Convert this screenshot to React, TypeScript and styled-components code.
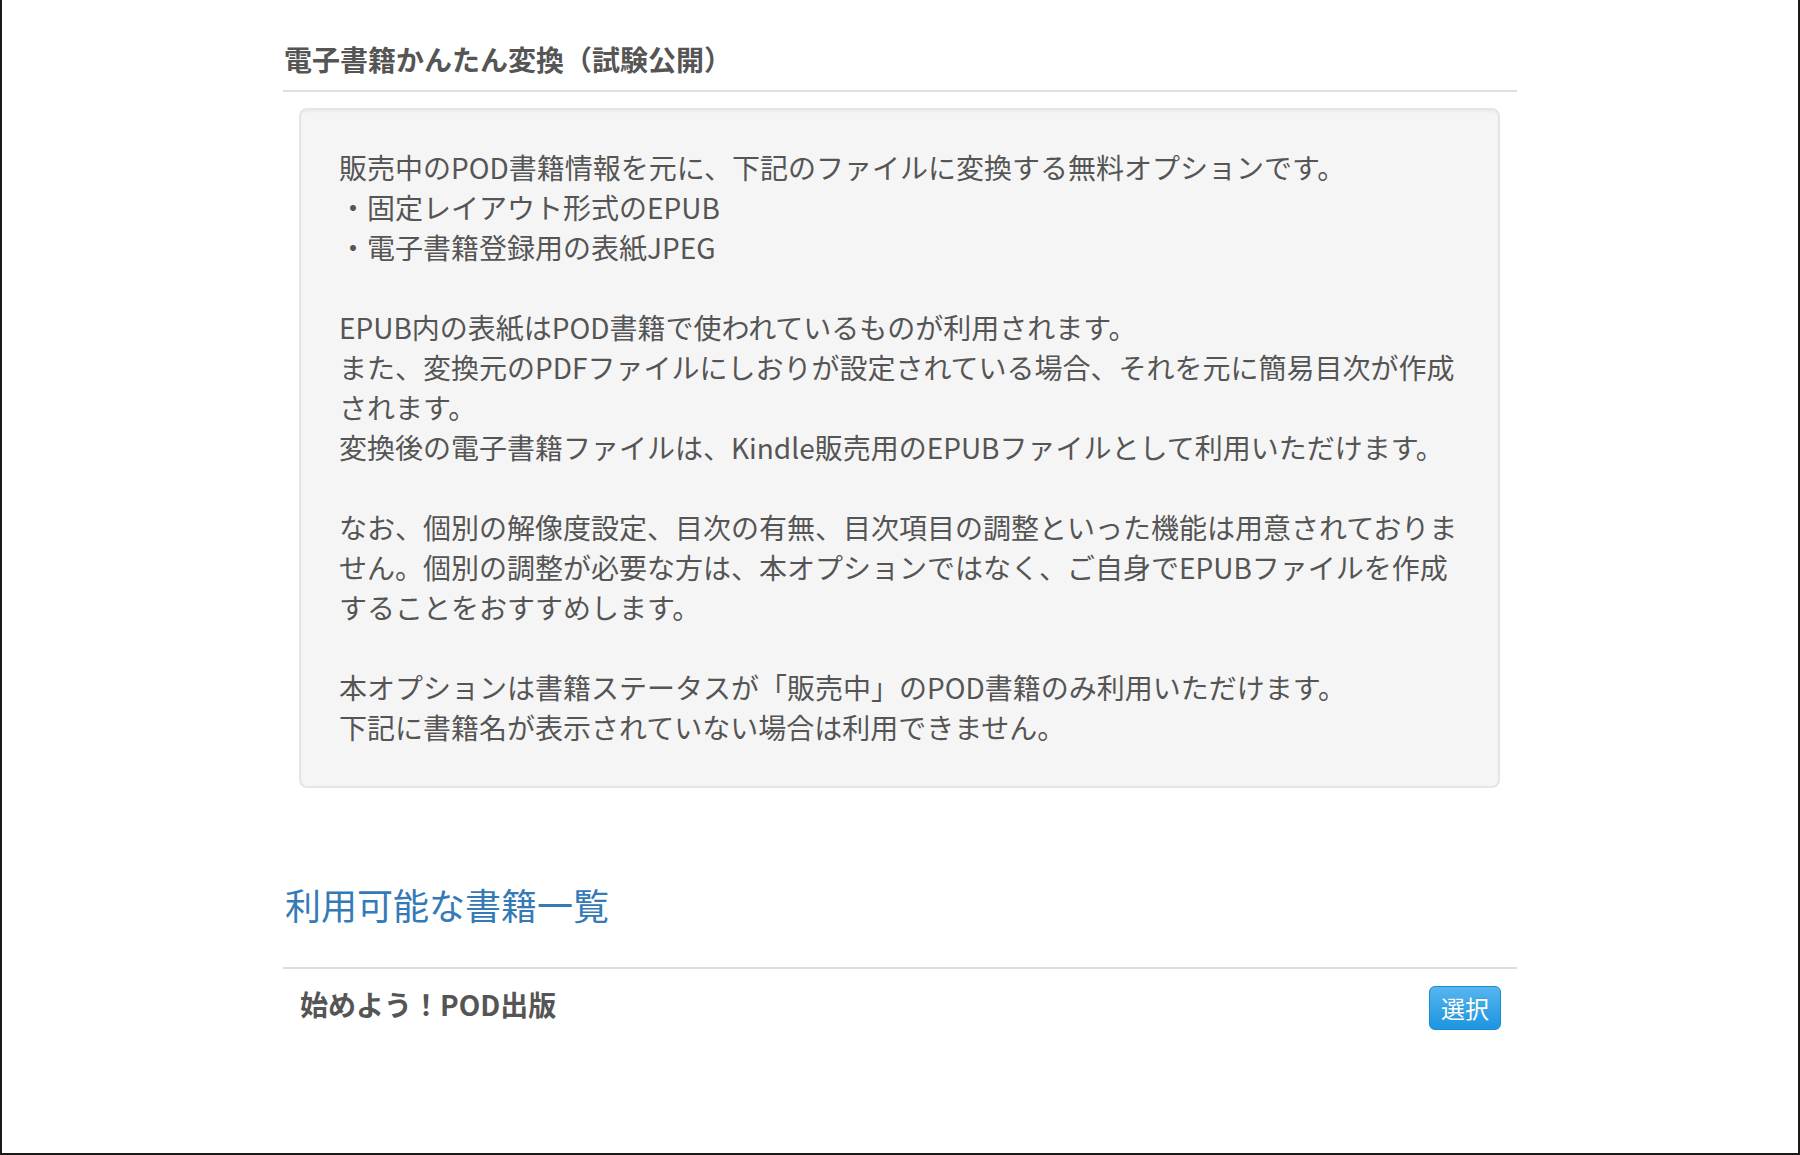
import React from "react";
import styled, { createGlobalStyle } from "styled-components";

const GlobalStyle = createGlobalStyle`
  html, body {
    margin: 0;
    padding: 0;
    background: #ffffff;
  }
  body {
    font-family: "Noto Sans CJK JP", "Noto Sans", sans-serif;
    color: #555555;
  }
  * {
    box-sizing: border-box;
  }
`;

const Frame = styled.div`
  min-height: 1155px;
  border: 2px solid #1c1816;
  border-top: none;
  background: #ffffff;
`;

const Container = styled.div`
  width: 1234px;
  margin: 0 auto;
  padding-top: 39px;
`;

const PageHeader = styled.h1`
  margin: 0;
  padding: 0 0 11px 1px;
  font-size: 28px;
  line-height: 40px;
  font-weight: 700;
  color: #555555;
  border-bottom: 2px solid #e0e0e0;
`;

const Well = styled.div`
  margin: 16px 17px 0 16px;
  padding: 37px 38px 39px 38px;
  background: #f5f5f5;
  border: 2px solid #e5e5e5;
  border-radius: 8px;
  box-shadow: inset 0 2px 2px rgba(0, 0, 0, 0.04);
`;

const WellText = styled.p`
  margin: 0;
  font-size: 28px;
  line-height: 40px;
  color: #555555;
`;

const SectionTitle = styled.h2`
  margin: 96px 0 0 0;
  padding-left: 2px;
  font-size: 36px;
  line-height: 40px;
  font-weight: 400;
  color: #337ab7;
`;

const BookList = styled.div`
  margin-top: 43px;
  border-top: 2px solid #dddddd;
`;

const BookRow = styled.div`
  display: flex;
  justify-content: space-between;
  align-items: flex-start;
  padding: 15px 16px 20px 17px;
`;

const BookName = styled.div`
  font-size: 28px;
  line-height: 40px;
  font-weight: 700;
  color: #555555;
`;

const SelectButton = styled.button`
  margin-top: 2px;
  font-family: "Noto Sans CJK JP", "Noto Sans", sans-serif;
  font-size: 24px;
  line-height: 36px;
  padding: 3px 11px;
  color: #ffffff;
  background: linear-gradient(to bottom, #56b5ef 0%, #1d95e0 100%);
  border: 1px solid #1a8bd6;
  border-radius: 6px;
  cursor: pointer;
  text-shadow: 0 -1px 0 rgba(0, 0, 0, 0.1);
`;

export default function App() {
  return (
    <>
      <GlobalStyle />
      <Frame>
        <Container>
          <PageHeader>電子書籍かんたん変換（試験公開）</PageHeader>
          <Well>
            <WellText>
              販売中のPOD書籍情報を元に、下記のファイルに変換する無料オプションです。
              <br />
              ・固定レイアウト形式のEPUB
              <br />
              ・電子書籍登録用の表紙JPEG
              <br />
              <br />
              EPUB内の表紙はPOD書籍で使われているものが利用されます。
              <br />
              また、変換元のPDFファイルにしおりが設定されている場合、それを元に簡易目次が作成されます。
              <br />
              変換後の電子書籍ファイルは、Kindle販売用のEPUBファイルとして利用いただけます。
              <br />
              <br />
              なお、個別の解像度設定、目次の有無、目次項目の調整といった機能は用意されておりません。個別の調整が必要な方は、本オプションではなく、ご自身でEPUBファイルを作成することをおすすめします。
              <br />
              <br />
              本オプションは書籍ステータスが「販売中」のPOD書籍のみ利用いただけます。
              <br />
              下記に書籍名が表示されていない場合は利用できません。
            </WellText>
          </Well>
          <SectionTitle>利用可能な書籍一覧</SectionTitle>
          <BookList>
            <BookRow>
              <BookName>始めよう！POD出版</BookName>
              <SelectButton type="button">選択</SelectButton>
            </BookRow>
          </BookList>
        </Container>
      </Frame>
    </>
  );
}
